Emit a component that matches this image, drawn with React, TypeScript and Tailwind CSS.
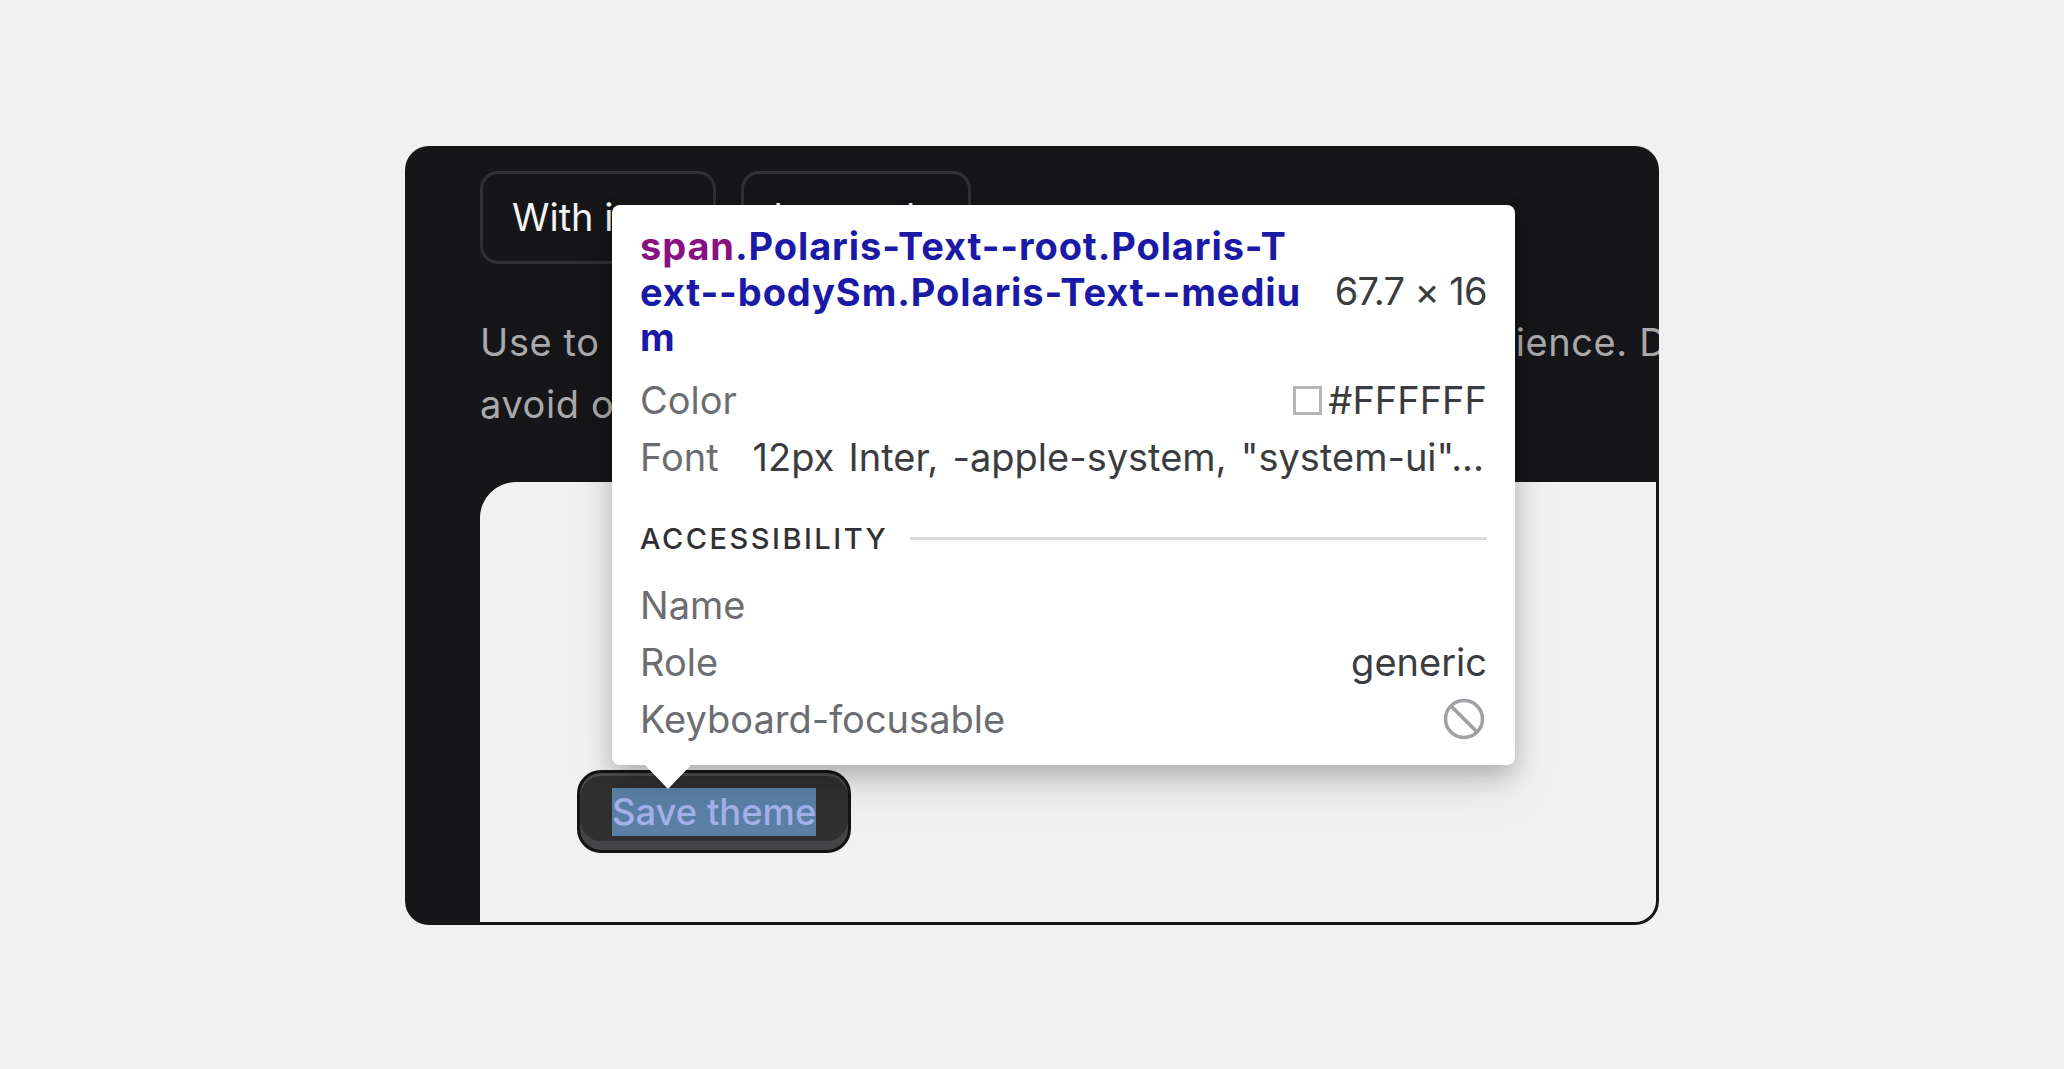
const font = { fontFamily: "Inter, 'Liberation Sans', sans-serif" };

function Row({ label, children }: { label: string; children?: React.ReactNode }) {
  return (
    <div className="flex h-[57px] items-center justify-between">
      <span className="text-[#6c6d71]">{label}</span>
      {children}
    </div>
  );
}

function Inspector() {
  return (
    <div className="absolute left-[207px] top-[59px] z-10 w-[903px] rounded-[8px] bg-white px-[28px] pt-[19px] text-[38px] text-[#3b3c40] shadow-[0_10px_24px_rgba(0,0,0,0.22),0_24px_50px_rgba(0,0,0,0.08)]">
      <div className="flex items-center justify-between">
        <div className="text-[38px] leading-[45.5px] font-bold tracking-[0.9px] whitespace-nowrap text-[#1a1aa6]">
          <span className="text-[#881280]">span</span>.Polaris-Text--root.Polaris-T
          <br />
          ext--bodySm.Polaris-Text--mediu
          <br />m
        </div>
        <div className="mb-[2px] whitespace-nowrap tracking-[-0.6px]">67.7 × 16</div>
      </div>
      <div className="mt-[11px]">
        <Row label="Color">
          <div className="flex items-center gap-[6px]">
            <span className="h-[29px] w-[29px] border-[3px] border-[#b5b5b5] bg-white" />
            <span>#FFFFFF</span>
          </div>
        </Row>
        <Row label="Font">
          <span className="mr-[3px] whitespace-nowrap [word-spacing:3.5px]">12px Inter, -apple-system, "system-ui"...</span>
        </Row>
      </div>
      <div className="mt-[31px] flex items-center gap-[22px]">
        <span className="text-[29px] font-medium tracking-[2.5px] text-[#303135]">ACCESSIBILITY</span>
        <div className="h-[3px] flex-1 bg-[#dcdcdc]" />
      </div>
      <div className="mt-[17px] pb-[17px]">
        <Row label="Name" />
        <Row label="Role">
          <span>generic</span>
        </Row>
        <Row label="Keyboard-focusable">
          <svg width="42" height="42" viewBox="0 0 42 42" fill="none" stroke="#a0a0a5" strokeWidth="3.5" className="mb-[2px] mr-[2px]">
            <circle cx="21" cy="21" r="18.5" />
            <path d="M8 8l26 26" />
          </svg>
        </Row>
      </div>
      <svg width="46" height="24" viewBox="0 0 46 24" className="absolute left-[33px] top-full">
        <polygon points="0,0 46,0 23,24" fill="#ffffff" />
      </svg>
    </div>
  );
}

export default function App() {
  return (
    <div className="flex h-screen items-center justify-center bg-[#f1f1f1] pt-[2px]" style={font}>
      <div className="relative flex h-[779px] w-[1254px] flex-col overflow-hidden rounded-[24px] bg-[#161618] pb-[3px] pl-[75px] pr-[3px] pt-[25px]">
        <div className="flex gap-[25px]">
          <div className="flex h-[93px] w-[236px] items-center rounded-[18px] border-[3px] border-[#303033] pl-[29px] text-[38px] whitespace-nowrap text-[#f3f3f3]">
            With icon
          </div>
          <div className="flex h-[93px] w-[230px] items-center rounded-[18px] border-[3px] border-[#303033] pl-[29px] text-[38px] whitespace-nowrap text-[#f3f3f3]">
            Icon only
          </div>
        </div>
        <p className="mt-[47px] text-[38px] leading-[62px] tracking-[0.6px] whitespace-nowrap text-[#a9a9ab]">
          Use to highlight the most important actions in any experience. Don't
          <br />
          avoid overwhelming merchants with too many
        </p>
        <div className="mt-[47px] min-h-0 flex-1 rounded-tl-[36px] rounded-br-[21px] bg-[#f1f1f1] pl-[97px] pt-[288px]">
          <div className="w-fit rounded-[24px] border-[3px] border-[#141416] bg-[#303030] px-[32px] pb-[14px] pt-[15px] shadow-[inset_0_3px_0_#4d4d4f,inset_0_-9px_0_#454547]">
            <div className="h-[48px] bg-[#5b7fa6] text-[36.4px] leading-[48px] font-medium whitespace-nowrap text-[#a3b2ea]">
              Save theme
            </div>
          </div>
        </div>
        <Inspector />
      </div>
    </div>
  );
}
